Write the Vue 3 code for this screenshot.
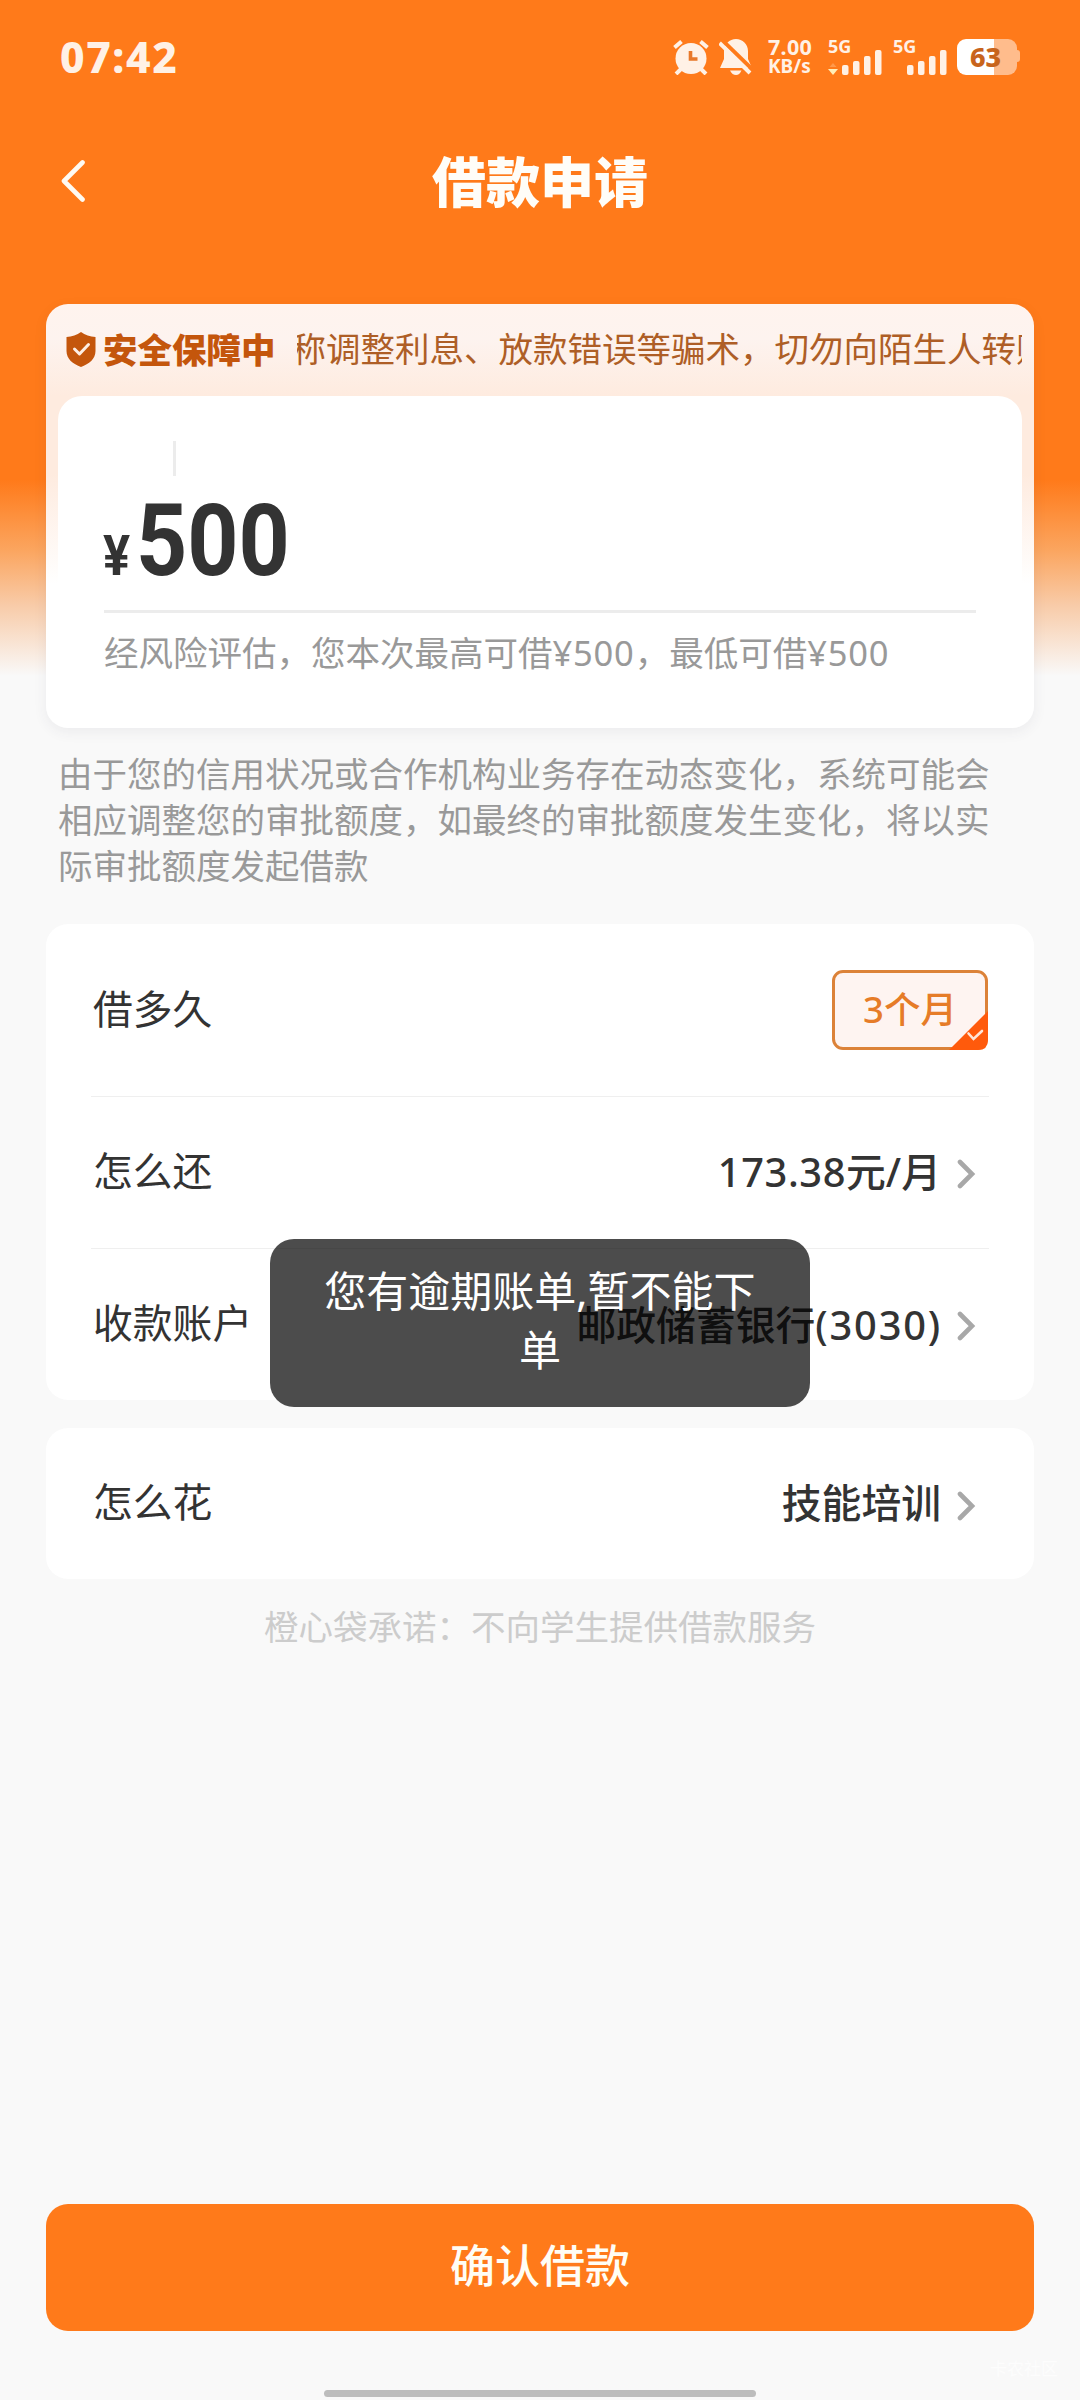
<script setup>
const bars = [
  { x: 14, y: 15, h: 10 },
  { x: 25, y: 11, h: 14 },
  { x: 36, y: 6, h: 19 },
  { x: 47, y: 0, h: 25 },
]
const signals = [
  { id: 1, arrows: true },
  { id: 2, arrows: false },
]
</script>

<template>
  <div class="page">
    <div class="status">
      <span class="time">07:42</span>
      <div class="tray">
        <svg class="alarm" width="36" height="36" viewBox="0 0 36 36">
          <g stroke="#fff1e6" stroke-width="4" fill="none">
            <path d="M1.5 8.5 L8.5 2.5 M34.5 8.5 L27.5 2.5" />
            <path d="M9 29 L3 35 M27 29 L33 35" />
          </g>
          <circle cx="18" cy="19.5" r="15.5" fill="#fff1e6" />
          <path d="M17.5 12 V20 H24.5" fill="none" stroke="#e8782a" stroke-width="3.6" />
        </svg>
        <svg class="bell" width="34" height="36" viewBox="0 0 34 36">
          <path d="M17 0 C23.5 0 29 5 29 12 V20 L33 29 H1 L5 20 V12 C5 5 10.500 0 17 0 Z" fill="#fff1e6" />
          <path d="M11 31.500 H22.500 C21 34.500 19.500 36 17 36 C14.500 36 12.500 34.500 11 31.500 Z" fill="#fff1e6" />
          <path d="M3 1 L34 31" stroke="#ff7a1a" stroke-width="4" />
          <path d="M0.500 4 L31 34" stroke="#fff1e6" stroke-width="4" />
        </svg>
        <div class="speed"><span class="rate">7.00</span><span class="unit">KB/s</span></div>
        <div v-for="s in signals" :key="s.id" class="signal">
          <span class="gen">5G</span>
          <svg class="bars" width="54" height="25" viewBox="0 0 54 25">
            <rect v-for="b in bars" :key="b.x" :x="b.x" :y="b.y" width="6.500" :height="b.h" rx="2" fill="#fff1e6" />
            <template v-if="s.arrows">
              <path d="M1.500 17 L5 13 L8.500 17 Z" fill="#ff9a4c" />
              <path d="M0 19 H10 L5 25 Z" fill="#ffeeb8" />
            </template>
          </svg>
        </div>
        <div class="battery"><span>63</span></div>
      </div>
    </div>

    <header class="nav">
      <svg class="back" width="26" height="44" viewBox="0 0 26 44">
        <path d="M22.500 2.500 L4 21 L22.500 39.500" fill="none" stroke="#fffaf2" stroke-width="4.600" stroke-linecap="round" stroke-linejoin="round" />
      </svg>
      <h1>借款申请</h1>
    </header>

    <section class="amount-card">
      <div class="safety">
        <svg width="30" height="35" viewBox="0 0 30 35">
          <path d="M15 0 C19 3 24 4.500 29.500 5 V19 C29.500 27 23 32 15 35 C7 32 0.500 27 0.500 19 V5 C6 4.500 11 3 15 0 Z" fill="#c4560c" />
          <path d="M8.500 17 L13.500 22 L22.500 12.500" fill="none" stroke="#fdeee4" stroke-width="3" stroke-linecap="round" stroke-linejoin="round" />
        </svg>
        <strong>安全保障中</strong>
        <div class="marquee"><span>称调整利息、放款错误等骗术，切勿向陌生人转账</span></div>
      </div>
      <div class="amount">
        <i class="tick"></i>
        <div class="money"><span class="yen">¥</span><span class="num">500</span></div>
        <p>经风险评估，您本次最高可借<span>¥500</span>，最低可借<span>¥500</span></p>
      </div>
    </section>

    <p class="note">由于您的信用状况或合作机构业务存在动态变化，系统可能会相应调整您的审批额度，如最终的审批额度发生变化，将以实际审批额度发起借款</p>

    <section class="card">
      <div class="row term">
        <span>借多久</span>
        <div class="chip">
          3个月
          <svg class="corner" width="39" height="39" viewBox="0 0 39 39">
            <path d="M39 0 V29 Q39 39 29 39 H0 Z" fill="#ff5a0c" />
            <path d="M19.500 22.500 L24.500 28 L33 20" fill="none" stroke="#ffe6d8" stroke-width="2.600" stroke-linecap="round" />
          </svg>
        </div>
      </div>
      <div class="row">
        <span>怎么还</span>
        <div class="value"><span><b>173.38</b>元/月</span>
          <svg width="20" height="32" viewBox="0 0 20 32"><path d="M3 4 L15 16 L3 28" /></svg>
        </div>
      </div>
      <div class="row">
        <span>收款账户</span>
        <div class="value bank"><span>邮政储蓄银行<b>(3030)</b></span>
          <svg width="20" height="32" viewBox="0 0 20 32"><path d="M3 4 L15 16 L3 28" /></svg>
        </div>
      </div>
    </section>

    <section class="card usage">
      <div class="row">
        <span>怎么花</span>
        <div class="value"><span>技能培训</span>
          <svg width="20" height="32" viewBox="0 0 20 32"><path d="M3 4 L15 16 L3 28" /></svg>
        </div>
      </div>
    </section>

    <p class="promise">橙心袋承诺：不向学生提供借款服务</p>

    <button class="submit">确认借款</button>
    <div class="home"></div>

    <div class="toast">您有逾期账单,暂不能下单</div>
    <span class="mark">卡农社区</span>
  </div>
</template>

<style>
body { margin: 0; background: #f9f9f9; }
</style>

<style scoped>
.page {
  position: relative;
  box-sizing: border-box;
  width: 1080px;
  height: 2400px;
  overflow: hidden;
  display: flex;
  flex-direction: column;
  background: linear-gradient(#ff7a1a 0, #ff7a1a 480px, #fba55f 550px, #f8cba8 605px, #f9f9f9 676px);
  font-family: "Noto Sans", "Noto Sans CJK SC", sans-serif;
  color: #333;
}
.status {
  display: flex;
  justify-content: space-between;
  height: 112px;
  padding: 0 60px;
  color: #fff1e6;
}
.time { font: 800 42.500px/113px "Noto Sans", sans-serif; letter-spacing: 1.6px; }
.tray { display: flex; align-items: flex-start; padding-top: 39px; }
.alarm { margin-right: 10px; }
.bell { margin-right: 15px; }
.speed { display: flex; flex-direction: column; width: 60px; font-weight: 700; }
.rate { font-size: 21.500px; line-height: 16px; letter-spacing: 0.3px; }
.unit { font-size: 19px; line-height: 23px; }
.signal { display: flex; flex-direction: column; width: 65px; height: 36px; }
.gen { font-size: 18px; line-height: 15px; height: 11px; font-weight: 700; }
.battery {
  position: relative;
  width: 60px;
  height: 36px;
  margin-right: 3px;
  margin-left: -1px;
  border-radius: 9px;
  background: linear-gradient(90deg, #fff 37px, #ffbc8c 37px);
  color: #c8641c;
  font: 800 27px/36px "Noto Sans", sans-serif;
  text-align: center;
}
.battery span { margin-left: -3px; }
.battery::after {
  content: "";
  position: absolute;
  left: 60px;
  top: 11px;
  width: 3px;
  height: 12px;
  border-radius: 0 3px 3px 0;
  background: #ffbc8c;
}
.nav {
  display: grid;
  grid-template-columns: 60px 1fr 60px;
  align-items: center;
  height: 140px;
  padding: 0 60px;
}
h1 {
  margin: -5px 0 0;
  text-align: center;
  color: #fffdf8;
  font: 900 54px/140px "Noto Sans CJK SC", sans-serif;
}
.amount-card {
  box-sizing: border-box;
  height: 424px;
  margin: 52px 46px 0;
  padding: 0 12px;
  border-radius: 22px;
  background: linear-gradient(#fff3ee 0, #fdf3ef 35px, #feebdf 92px, #feebdf 170px, #fff 280px);
  box-shadow: 0 4px 14px rgba(60, 60, 90, 0.07);
}
.safety { box-sizing: border-box; display: flex; align-items: center; height: 92px; padding: 0 0 2px 8px; color: #c4560c; }
.safety svg { margin-right: 7px; }
.safety strong { font: 900 34.500px/50px "Noto Sans CJK SC", sans-serif; margin-top: -2px; }
.marquee { flex: 1; margin-left: 21px; overflow: hidden; color: #ae5e26; }
.marquee span { display: block; margin-left: -5px; font-size: 34.500px; line-height: 50px; white-space: nowrap; }
.amount { box-sizing: border-box; height: 332px; padding: 45px 46px 0; border-radius: 24px; background: #fff; }
.tick { display: block; width: 3px; height: 35px; margin-left: 69px; background: #ececec; }
.money {
  display: flex;
  align-items: baseline;
  height: 134px;
  border-bottom: 3px solid #ececec;
  font-family: Roboto, sans-serif;
  font-weight: 700;
  line-height: 130px;
}
.yen { font-size: 55px; width: 33px; transform: scaleX(0.92); transform-origin: 0 50%; margin-left: -1px; }
.num { font-size: 101px; transform: scaleX(0.885); transform-origin: 0 50%; }
.amount p { margin: 15px 0 0; font-size: 34.500px; line-height: 50px; color: #999; white-space: nowrap; }
.amount p span { letter-spacing: 0.8px; }
.note { margin: 23px 58px 0; width: 940px; font-size: 34.500px; line-height: 46px; color: #999; }
.card { margin: 34.500px 46px 0; padding: 0 45px; border-radius: 22px; background: #fff; }
.row {
  box-sizing: border-box;
  display: flex;
  align-items: center;
  justify-content: space-between;
  height: 152px;
  padding: 0 1px 3px 2px;
  border-top: 1px solid #efefef;
  font-size: 39.800px;
  white-space: nowrap;
}
.row > span, .value > span { position: relative; top: -2px; }
.value > span { top: -1px; }
.bank > span { top: 0; }
.term, .usage .row { border-top: 0; }
.term { height: 172px; padding-bottom: 0; }
.term > span { top: -3px; }
.usage { margin-top: 28px; }
.usage .row { height: 151px; padding-bottom: 2px; }
.chip {
  position: relative;
  box-sizing: border-box;
  width: 156px;
  height: 80px;
  border: 3px solid #dc8238;
  border-radius: 11px;
  background: #fef4f1;
  color: #e67c28;
  font-size: 36.500px;
  font-weight: 500;
  line-height: 73px;
  text-align: center;
}
.corner { position: absolute; right: -3px; bottom: -3px; }
.value { display: flex; align-items: center; padding-right: 11px; font-weight: 500; }
.value svg { margin: 7px 0 0 16px; fill: none; stroke: #a8a8a8; stroke-width: 4.600; stroke-linecap: round; }
.value b { font-weight: 500; letter-spacing: 0.6px; }
.bank b { letter-spacing: 1.800px; margin-right: -1px; }
.promise { margin: 23px 0 0; font-size: 34.500px; line-height: 50px; text-align: center; color: #ccc; }
.submit {
  margin: auto 46px 59px;
  padding: 0 0 7px;
  height: 127px;
  flex: none;
  border: 0;
  border-radius: 22px;
  background: #ff7a1a;
  color: #fffdf5;
  font: 500 45px/120px "Noto Sans CJK SC", sans-serif;
}
.home { flex: none; width: 432px; height: 7px; margin: 0 auto 3px; border-radius: 4px; background: #bdbdbd; }
.toast {
  position: absolute;
  left: 270px;
  top: 1239px;
  box-sizing: border-box;
  width: 540px;
  height: 168px;
  padding: 22px 52px;
  border-radius: 24px;
  background: rgba(0, 0, 0, 0.7);
  color: #fff;
  font-size: 42px;
  line-height: 59px;
  text-align: center;
}
.mark { position: absolute; right: 22px; bottom: 19px; font-size: 17px; line-height: 24px; color: #fdfdfd; }
</style>
